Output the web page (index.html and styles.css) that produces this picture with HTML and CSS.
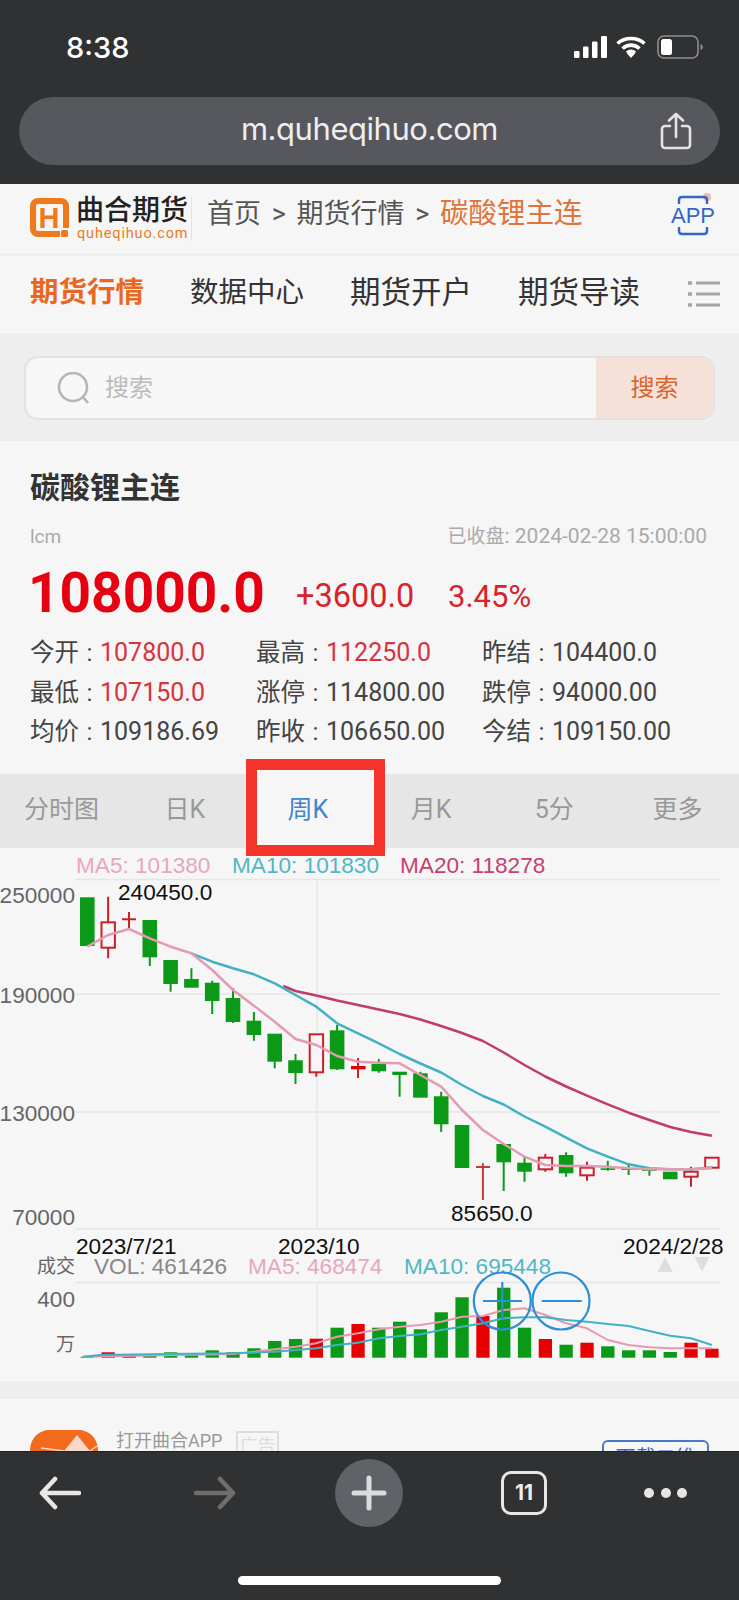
FILE: index.html
```html
<!DOCTYPE html>
<html lang="zh-CN">
<head>
  <meta charset="UTF-8" />
  <meta name="viewport" content="width=device-width, initial-scale=1.0" />
  <title>碳酸锂主连 - 曲合期货</title>
  <link rel="stylesheet" href="styles.css">
</head>
<body>
<div class="phone">

  <div class="browser-top">
    <div class="status-row">
      <span class="clock">8:38</span>
      <div class="status-icons">
        <svg class="signal" width="34" height="22" viewBox="0 0 34 22">
          <rect x="0" y="15" width="5.5" height="7" rx="1.2" fill="#fff"/>
          <rect x="9" y="10.5" width="5.5" height="11.5" rx="1.2" fill="#fff"/>
          <rect x="18" y="5.5" width="5.5" height="16.5" rx="1.2" fill="#fff"/>
          <rect x="27" y="0" width="6" height="22" rx="1.2" fill="#fff"/>
        </svg>
        <svg width="30" height="22" viewBox="0 0 30 22" fill="none" stroke="#fff" stroke-width="3.6">
          <path d="M1.5 7.5C9 .8 21 .8 28.5 7.5"/>
          <path d="M6.5 12.5C11.5 8 18.5 8 23.5 12.5"/>
          <path d="M11 17C13.5 15 16.5 15 19 17"/>
          <path d="M15 22l-4-4.5q4-2.5 8 0z" fill="#fff" stroke="none"/>
        </svg>
        <svg width="46" height="24" viewBox="0 0 46 24">
          <rect x="1" y="1" width="40" height="22" rx="6" fill="none" stroke="#8d8e90" stroke-width="1.6"/>
          <rect x="4" y="4" width="11" height="16" rx="2.5" fill="#fff"/>
          <path d="M43.5 9c1.5.5 2.3 1.5 2.3 3s-.8 2.5-2.3 3z" fill="#8d8e90"/>
        </svg>
      </div>
    </div>
    <div class="url-pill">
      <span class="url-text">m.quheqihuo.com</span>
      <svg class="share-icon" width="32" height="38" viewBox="0 0 32 38" fill="none" stroke="#e4e4e4" stroke-width="2.6" stroke-linecap="round" stroke-linejoin="round">
        <path d="M16 25V2M9 8.5L16 2l7 6.5"/>
        <path d="M10 14H5a3 3 0 0 0-3 3v16a3 3 0 0 0 3 3h22a3 3 0 0 0 3-3V17a3 3 0 0 0-3-3h-5"/>
      </svg>
    </div>
  </div>

  <div class="site-head">
    <svg class="logo-mark" width="39" height="40" viewBox="0 0 39 40">
      <path d="M30 36H8a5 5 0 0 1-5-5V8a5 5 0 0 1 5-5h23a5 5 0 0 1 5 5v22" fill="#f8f6f4" stroke="#ee7a1c" stroke-width="6"/>
      <rect x="31" y="32" width="7" height="7" rx="1.5" fill="#ee7a1c"/>
      <text x="19" y="30" class="logo-h">H</text>
    </svg>
    <div class="logo-text">
      <span class="logo-name">曲合期货</span>
      <span class="logo-site">quheqihuo.com</span>
    </div>
    <div class="crumbs">首页 &gt; 期货行情 &gt; <span class="crumb-now">碳酸锂主连</span></div>
    <svg class="app-icon" width="46" height="44" viewBox="0 0 46 44" fill="none">
      <circle cx="37" cy="4" r="4" fill="#f2b9b0"/>
      <path d="M9 11V7q0-3 3-3h22q3 0 3 3v4M9 34v4q0 3 3 3h22q3 0 3-3v-4" stroke="#3467c4" stroke-width="2.4"/>
      <text x="23" y="30" class="app-label">APP</text>
    </svg>
  </div>

  <nav class="main-nav">
    <a class="nav-item nav-now">期货行情</a>
    <a class="nav-item nav-small">数据中心</a>
    <a class="nav-item">期货开户</a>
    <a class="nav-item">期货导读</a>
    <svg class="nav-menu" width="32" height="28" viewBox="0 0 32 28" fill="none" stroke="#a5a5a5" stroke-width="3">
      <path d="M8 3h24M8 14h24M8 25h24"/>
      <path d="M0 3h4M0 14h4M0 25h4" stroke-width="3.5"/>
    </svg>
  </nav>

  <div class="search-band">
    <div class="search-box">
      <div class="search-field">
        <svg width="33" height="32" viewBox="0 0 33 32" fill="none" stroke="#b5b5b5" stroke-width="2.6">
          <circle cx="16" cy="15" r="14"/>
          <path d="M26 25l5 6"/>
        </svg>
        <span class="search-hint">搜索</span>
      </div>
      <div class="search-btn">搜索</div>
    </div>
  </div>

  <section class="quote">
    <h1 class="quote-name">碳酸锂主连</h1>
    <div class="quote-meta">
      <span class="quote-code">lcm</span>
      <span class="quote-time"><span class="time-cn">已收盘</span>: 2024-02-28 15:00:00</span>
    </div>
    <div class="price-row">
      <span class="price">108000.0</span>
      <span class="price-change">+3600.0</span>
      <span class="price-pct">3.45%</span>
    </div>
    <div class="quote-grid">
      <div>今开<i>:</i><b class="up">107800.0</b></div>
      <div>最高<i>:</i><b class="up">112250.0</b></div>
      <div>昨结<i>:</i><b>104400.0</b></div>
      <div>最低<i>:</i><b class="up">107150.0</b></div>
      <div>涨停<i>:</i><b>114800.00</b></div>
      <div>跌停<i>:</i><b>94000.00</b></div>
      <div>均价<i>:</i><b>109186.69</b></div>
      <div>昨收<i>:</i><b>106650.00</b></div>
      <div>今结<i>:</i><b>109150.00</b></div>
    </div>
  </section>

  <div class="chart-tabs">
    <span class="tab">分时图</span>
    <span class="tab">日K</span>
    <span class="tab tab-now">周K</span>
    <span class="tab">月K</span>
    <span class="tab">5分</span>
    <span class="tab">更多</span>
    <div class="red-mark"></div>
  </div>

  <!-- viewBox keeps page coordinates, so y here = y on the screen -->
  <svg class="chart" width="739" height="533" viewBox="0 848 739 533">
    <g class="grid">
      <path d="M75 879.5H720M75 994H720M75 1112H720M75 1229H720M75 1282.5H720M317 879.5V1229M317 1282.5V1357"/>
    </g>

    <text x="76" y="873" class="t c-ma5">MA5: 101380</text>
    <text x="232" y="873" class="t c-ma10">MA10: 101830</text>
    <text x="400" y="873" class="t c-ma20">MA20: 118278</text>

    <g class="t c-axis" text-anchor="end">
      <text x="75" y="903">250000</text>
      <text x="75" y="1003">190000</text>
      <text x="75" y="1121">130000</text>
      <text x="75" y="1225">70000</text>
      <text x="75" y="1307">400</text>
    </g>
    <text x="118" y="899.5" class="t">240450.0</text>
    <text x="451" y="1221" class="t">85650.0</text>
    <text x="76" y="1253.5" class="t">2023/7/21</text>
    <text x="278" y="1253.5" class="t">2023/10</text>
    <text x="623" y="1253.5" class="t">2024/2/28</text>

    <path class="wick-g" d="M149.8 957V966M170.6 984V991.7M191.4 968.3V980M212.2 980.7V1014M233 988V1023M253.9 1012V1040.7M274.7 1061V1068.3M295.5 1054V1084M337.1 1025V1070M378.8 1059V1072.7M399.6 1075V1096.7M420.4 1071.7V1074M441.2 1091.7V1132M503.7 1162V1191M524.5 1156.7V1181.7M566.1 1152.3V1176.7M607.8 1160.7V1170.7M628.6 1163V1175M649.4 1170V1175.7"/>
    <g class="body-g">
      <rect x="80" y="897.3" width="14.6" height="48.7"/>
      <rect x="142.5" y="920" width="14.6" height="37.3"/>
      <rect x="163.3" y="960" width="14.6" height="24"/>
      <rect x="184.1" y="979" width="14.6" height="8.7"/>
      <rect x="204.9" y="982.7" width="14.6" height="18.3"/>
      <rect x="225.7" y="998" width="14.6" height="24"/>
      <rect x="246.6" y="1020.7" width="14.6" height="14.3"/>
      <rect x="267.4" y="1033.7" width="14.6" height="28"/>
      <rect x="288.2" y="1060.3" width="14.6" height="12.7"/>
      <rect x="329.8" y="1030.3" width="14.6" height="39"/>
      <rect x="371.5" y="1064" width="14.6" height="7.3"/>
      <rect x="392.3" y="1071.7" width="14.6" height="3.3"/>
      <rect x="413.1" y="1073.3" width="14.6" height="24.4"/>
      <rect x="433.9" y="1096.3" width="14.6" height="28"/>
      <rect x="454.7" y="1125" width="14.6" height="43"/>
      <rect x="496.4" y="1144" width="14.6" height="18.3"/>
      <rect x="517.2" y="1162.7" width="14.6" height="9"/>
      <rect x="558.8" y="1155" width="14.6" height="18.3"/>
      <rect x="600.5" y="1168.3" width="14.6" height="1.6"/>
      <rect x="621.3" y="1168.3" width="14.6" height="1.6"/>
      <rect x="642.1" y="1169.3" width="14.6" height="1.6"/>
      <rect x="662.9" y="1171.7" width="14.6" height="7.6"/>
    </g>
    <path class="wick-r" d="M108.1 896.7V922.3M108.1 947.7V958.3M129 912V928M122 919.3H136M316.3 1072.3V1076.7M358 1058V1078M545.3 1154V1157.7M545.3 1169.3V1171.7M587 1161.7V1167.7M587 1175.3V1180.7M691 1166.7V1171.7M691 1176.7V1186.7"/>
    <path class="wick-thin" d="M482.9 1163.3V1200M476 1167H490"/>
    <g class="body-r">
      <rect x="101.5" y="922.3" width="13.4" height="25.4"/>
      <rect x="309.7" y="1034.3" width="13.4" height="38"/>
      <rect x="538.7" y="1157.7" width="13.4" height="11.6"/>
      <rect x="580.3" y="1167.7" width="13.4" height="7.6"/>
      <rect x="684.3" y="1171.7" width="13.4" height="5"/>
      <rect x="705.2" y="1157.7" width="13.4" height="10"/>
    </g>
    <rect x="351" y="1066" width="14.6" height="3.3" fill="#e00000"/>

    <polyline class="line-ma20" points="283.3,986 295.5,991 316.3,995.5 337.1,1000.5 358,1005 378.8,1009.5 399.6,1014 420.4,1019.5 441.2,1026 462,1033 482.9,1041 503.7,1052.5 524.5,1065 545.3,1076.5 566.1,1086.5 587,1095.7 607.8,1104.3 628.6,1112.7 649.4,1120 670.2,1127 691,1132 711.9,1135.7"/>
    <polyline class="line-ma10" points="191.4,953.3 212.2,961.7 233,968.3 253.9,974.3 274.7,983.3 295.5,995 316.3,1006.7 337.1,1023.3 358,1033.3 378.8,1043.3 399.6,1054 420.4,1063.5 441.2,1072.5 462,1085 482.9,1096 503.7,1104.5 524.5,1116.5 545.3,1126.7 566.1,1137.7 587,1148.3 607.8,1156.7 628.6,1164.3 649.4,1168.3 670.2,1169.3 691,1169.3 711.9,1167.7"/>
    <polyline class="line-ma5" points="87.3,946.7 108.1,935 129,929 149.8,938.3 170.6,946.7 191.4,953.3 212.2,970 233,990 253.9,1005.7 274.7,1021.7 295.5,1039 316.3,1045 337.1,1056 358,1061.7 378.8,1062.7 399.6,1063.3 420.4,1075 441.2,1086.7 462,1110 482.9,1130 503.7,1144 524.5,1156.7 545.3,1165 566.1,1166 587,1166 607.8,1166.7 628.6,1168.3 649.4,1169.3 670.2,1169.3 691,1169.3 711.9,1168.3"/>

    <text x="75" y="1272.5" class="t-cjk c-axis" text-anchor="end">成交</text>
    <text x="94" y="1274" class="t c-vol">VOL: 461426</text>
    <text x="248" y="1274" class="t c-ma5">MA5: 468474</text>
    <text x="404" y="1274" class="t c-ma10">MA10: 695448</text>
    <text x="75" y="1351" class="t-cjk c-axis" text-anchor="end">万</text>
    <polygon points="665,1257 657.5,1272 672.5,1272" fill="#dedede"/>
    <polygon points="702,1272 694.5,1257 709.5,1257" fill="#dedede"/>

    <g class="bar-g">
      <rect x="80.7" y="1356.7" width="13.3" height="1"/>
      <rect x="143.2" y="1355.7" width="13.3" height="2"/>
      <rect x="164" y="1352.3" width="13.3" height="5.4"/>
      <rect x="184.8" y="1354" width="13.3" height="3.7"/>
      <rect x="205.6" y="1350.3" width="13.3" height="7.4"/>
      <rect x="226.4" y="1352.3" width="13.3" height="5.4"/>
      <rect x="247.3" y="1348.3" width="13.3" height="9.4"/>
      <rect x="268.1" y="1341" width="13.3" height="16.7"/>
      <rect x="288.9" y="1339" width="13.3" height="18.7"/>
      <rect x="330.5" y="1327.7" width="13.3" height="30"/>
      <rect x="372.2" y="1327.7" width="13.3" height="30"/>
      <rect x="393" y="1321.7" width="13.3" height="36"/>
      <rect x="413.8" y="1329.3" width="13.3" height="28.4"/>
      <rect x="434.6" y="1312.3" width="13.3" height="45.4"/>
      <rect x="455.4" y="1297.3" width="13.3" height="60.4"/>
      <rect x="497.1" y="1287.7" width="13.3" height="70"/>
      <rect x="517.9" y="1327.7" width="13.3" height="30"/>
      <rect x="559.5" y="1344.7" width="13.3" height="13"/>
      <rect x="601.2" y="1346.3" width="13.3" height="11.4"/>
      <rect x="622" y="1350.3" width="13.3" height="7.4"/>
      <rect x="642.8" y="1350.3" width="13.3" height="7.4"/>
      <rect x="663.6" y="1352" width="13.3" height="5.7"/>
    </g>
    <g class="bar-r">
      <rect x="101.5" y="1352.3" width="13.3" height="5.4"/>
      <rect x="122.4" y="1356" width="13.3" height="1.7"/>
      <rect x="309.7" y="1338.7" width="13.3" height="19"/>
      <rect x="351.4" y="1324" width="13.3" height="33.7"/>
      <rect x="476.3" y="1316" width="13.3" height="41.7"/>
      <rect x="538.7" y="1339" width="13.3" height="18.7"/>
      <rect x="580.4" y="1342.7" width="13.3" height="15"/>
      <rect x="684.4" y="1342.7" width="13.3" height="15"/>
      <rect x="705.3" y="1348.7" width="13.3" height="9"/>
    </g>
    <polyline class="vol-ma5" points="83.3,1356.7 233,1354 254,1351.7 275,1349.3 296,1346.7 316,1343.3 337,1336.7 358,1333.3 379,1329.3 400,1326.7 420.4,1325 441.2,1321.7 462,1316.7 483,1316 503.7,1310 524.5,1308.3 545.3,1315 566.1,1323.3 587,1328.3 607.8,1340 628.6,1345 649.4,1347.3 670.2,1348.3 691,1348.3 711.9,1348.3"/>
    <polyline class="vol-ma10" points="83.3,1356.7 100,1355 167,1354 233,1353.3 275,1351.7 316,1348.3 337,1345 358,1342.7 379,1338.3 400,1336 420.4,1334.3 441.2,1330 462,1326.7 483,1323.3 503.7,1318.3 524.5,1317.3 545.3,1317.3 566.1,1320 587,1321.7 607.8,1324 628.6,1326 649.4,1331 670.2,1335.7 691,1338.3 711.9,1345"/>

    <!-- zoom buttons over the volume chart -->
    <g class="zoom-btn">
      <circle cx="502.3" cy="1301" r="28.5"/>
      <circle cx="561" cy="1301" r="28.5"/>
      <path d="M483 1301H522M502.3 1282V1320M541.7 1301H581.7"/>
    </g>
  </svg>

  <div class="band"></div>

  <div class="ad-row">
    <svg class="ad-icon" width="68" height="21" viewBox="0 0 68 21">
      <path d="M0 21C0 8 9 0 20 0H48C59 0 68 8 68 21Z" fill="#f26a1b"/>
      <path d="M34 21L47 5 60 21Z" fill="#f9d9c8"/>
      <path d="M11 18l23 3M60 21l7-5" stroke="#f9d9c8" stroke-width="1.5" fill="none"/>
    </svg>
    <span class="ad-name">打开曲合APP</span>
    <span class="ad-tag">广告</span>
    <span class="ad-btn">下载二维</span>
  </div>

  <div class="browser-bottom">
    <div class="tool-row">
      <svg width="42" height="34" viewBox="0 0 42 34" fill="none" stroke="#e6e6e6" stroke-width="4.6" stroke-linecap="round" stroke-linejoin="round">
        <path d="M40 17H3M16 3L3 17l13 14"/>
      </svg>
      <svg class="tool-fwd" width="42" height="34" viewBox="0 0 42 34" fill="none" stroke="#6e6e6e" stroke-width="4.6" stroke-linecap="round" stroke-linejoin="round">
        <path d="M2 17h37M26 3l13 14-13 14"/>
      </svg>
      <div class="plus-btn">
        <svg width="36" height="36" viewBox="0 0 36 36" stroke="#dcdcdc" stroke-width="5" stroke-linecap="round">
          <path d="M3 18h30M18 3v30"/>
        </svg>
      </div>
      <div class="tab-count">11</div>
      <div class="more-dots"><i></i><i></i><i></i></div>
    </div>
    <div class="home-bar"></div>
  </div>

</div>
</body>
</html>
```
FILE: styles.css
```css
* {
  box-sizing: border-box;
}
body {
  margin: 0;
  background: #f6f6f6;
  font-family: Roboto, "Noto Sans CJK SC", sans-serif;
}
.phone {
  width: 739px;
  height: 1600px;
  overflow: hidden;
  display: flex;
  flex-direction: column;
}

/* browser chrome, top */
.browser-top {
  height: 184px;
  background: #303133;
  padding: 0 19px;
  flex: none;
}
.status-row {
  height: 97px;
  display: flex;
  align-items: center;
  justify-content: space-between;
  padding: 0 17px 3px 47px;
}
.clock {
  color: #fff;
  font: 500 29px Inter, sans-serif;
}
.status-icons {
  display: flex;
  align-items: center;
  gap: 11px;
}
.signal {
  margin-right: -3px;
}
.url-pill {
  height: 68px;
  border-radius: 34px;
  background: #56585e;
  display: flex;
  align-items: center;
  justify-content: center;
  padding-bottom: 5px;
  position: relative;
}
.url-text {
  color: #eee;
  font: 400 31px Inter, sans-serif;
  letter-spacing: -0.45px;
}
.share-icon {
  position: absolute;
  right: 28px;
  top: 15px;
}

/* site header */
.site-head {
  height: 72px;
  flex: none;
  display: flex;
  align-items: center;
  padding-left: 30px;
  background: #f6f6f6;
  border-bottom: 3px solid #eee;
  position: relative;
}
.logo-mark {
  flex: none;
  margin-top: -2px;
}
.logo-h {
  font: 700 29px "Liberation Sans", sans-serif;
  fill: #ee7a1c;
  text-anchor: middle;
}
.logo-text {
  display: flex;
  flex-direction: column;
  margin-left: 7px;
  width: 116px;
  padding-right: 4px;
  border-right: 1px solid #e4e4e4;
}
.logo-name {
  font-size: 28px;
  line-height: 28px;
  font-weight: 500;
  color: #222;
  white-space: nowrap;
}
.logo-site {
  font: 400 14.5px/15px Roboto, sans-serif;
  color: #ee7a1c;
  letter-spacing: 0.85px;
  margin-top: 1px;
  padding-left: 1px;
  white-space: nowrap;
}
.crumbs {
  margin-left: 15px;
  font-size: 27px;
  word-spacing: 4px;
  color: #555;
  white-space: nowrap;
  margin-top: -16px;
}
.crumb-now {
  font-size: 28.5px;
  color: #e0743a;
}
.app-icon {
  position: absolute;
  left: 670px;
  top: 9px;
}
.app-label {
  font: 400 22px "Liberation Sans", sans-serif;
  fill: #3467c4;
  text-anchor: middle;
}

/* nav */
.main-nav {
  height: 77px;
  flex: none;
  display: flex;
  align-items: center;
  padding: 0 0 10px 30px;
  background: #f6f6f6;
  position: relative;
}
.nav-item {
  font-size: 30.5px;
  color: #333;
  margin-right: 46px;
  white-space: nowrap;
}
.nav-small {
  font-size: 28.5px;
}
.nav-now {
  font-size: 28.5px;
  font-weight: 700;
  color: #e8681f;
}
.nav-menu {
  position: absolute;
  left: 688px;
  top: 24px;
}

/* search */
.search-band {
  height: 108px;
  flex: none;
  background: #eee;
  padding: 23px 24px 0;
}
.search-box {
  height: 64px;
  display: flex;
  border: 2px solid #e2e2e2;
  border-radius: 14px;
  background: #f7f7f7;
  overflow: hidden;
}
.search-field {
  flex: 1;
  display: flex;
  align-items: center;
  gap: 15px;
  padding-left: 31px;
}
.search-hint {
  font-size: 24px;
  color: #bbb;
  margin-top: -6px;
}
.search-btn {
  width: 117px;
  background: #f6e1d9;
  color: #d9652e;
  font-size: 24px;
  display: flex;
  align-items: center;
  justify-content: center;
  padding-bottom: 6px;
}

/* quote */
.quote {
  height: 333px;
  flex: none;
  background: #f6f6f6;
  padding: 25px 30px 0;
}
.quote-name {
  margin: 0;
  font-size: 30px;
  line-height: 44px;
  font-weight: 700;
  color: #333;
}
.quote-meta {
  display: flex;
  justify-content: space-between;
  align-items: center;
  margin-top: 13px;
  color: #aaa;
  line-height: 26px;
  padding-right: 2px;
}
.quote-code {
  font-size: 19px;
}
.quote-time {
  font-size: 21px;
}
.time-cn {
  font-size: 19px;
}
.price-row {
  display: flex;
  align-items: center;
  height: 62px;
  margin-top: 12px;
}
.price {
  font: 700 55px Roboto, sans-serif;
  color: #e60012;
  width: 268px;
  margin-left: -2px;
}
.price-change {
  font-size: 32.5px;
  color: #d8232a;
  width: 152px;
  margin-top: 6px;
}
.price-pct {
  font-size: 31px;
  color: #d8232a;
  margin-top: 6px;
}
.quote-grid {
  display: grid;
  grid-template-columns: 226px 226px 1fr;
  grid-auto-rows: 39.5px;
  align-items: center;
  margin-top: 7px;
  font-size: 24.5px;
  color: #444;
  white-space: nowrap;
}
.quote-grid i {
  display: inline-block;
  width: 21px;
  text-align: center;
  font-style: normal;
}
.quote-grid b {
  font-size: 25px;
  font-weight: 400;
}
.quote-grid .up {
  color: #d8323c;
}

/* tabs */
.chart-tabs {
  height: 74px;
  flex: none;
  background: #e6e6e6;
  display: flex;
  position: relative;
}
.chart-tabs::before {
  content: "";
  position: absolute;
  left: 257px;
  top: 0;
  width: 118px;
  height: 74px;
  background: #f6f6f6;
}
.tab {
  flex: 1;
  display: flex;
  align-items: center;
  justify-content: center;
  font-size: 25px;
  color: #999;
  padding-bottom: 8px;
  z-index: 1;
}
.tab-now {
  color: #3f86cc;
}
.red-mark {
  position: absolute;
  left: 246px;
  top: -15px;
  width: 139px;
  height: 97px;
  border: 11px solid #f4332a;
  z-index: 2;
}

/* chart */
.chart {
  display: block;
  flex: none;
  background: #f6f6f6;
}
.grid path {
  stroke: #e6e6e6;
  stroke-width: 1.3;
  fill: none;
}
.t {
  font: 400 22.6px "Liberation Sans", sans-serif;
  fill: #111;
}
.t-cjk {
  font: 400 19px "Noto Sans CJK SC", sans-serif;
}
.c-ma5 { fill: #e8a6bd; }
.c-ma10 { fill: #4fb7c6; }
.c-ma20 { fill: #c7406f; }
.c-axis { fill: #666; }
.c-vol { fill: #888; }
.wick-g {
  stroke: #0a9a17;
  stroke-width: 2;
  fill: none;
}
.body-g {
  fill: #0a9a17;
}
.wick-r {
  stroke: #cc2028;
  stroke-width: 2;
  fill: none;
}
.wick-thin {
  stroke: #c23a3a;
  stroke-width: 2;
  fill: none;
}
.body-r {
  stroke: #cc2028;
  stroke-width: 2;
  fill: #f6f6f6;
}
.line-ma5, .line-ma10, .line-ma20, .vol-ma5, .vol-ma10 {
  fill: none;
  stroke-linejoin: round;
}
.line-ma5 {
  stroke: #e39ab3;
  stroke-width: 2.5;
}
.line-ma10 {
  stroke: #40b2c4;
  stroke-width: 2.5;
}
.line-ma20 {
  stroke: #c23a6e;
  stroke-width: 2.5;
}
.bar-g {
  fill: #0a9a17;
}
.bar-r {
  fill: #e60000;
}
.vol-ma5 {
  stroke: #e998b0;
  stroke-width: 2;
}
.vol-ma10 {
  stroke: #40b2c4;
  stroke-width: 2;
}
.zoom-btn {
  fill: none;
  stroke: #2f8ed8;
  stroke-width: 2.2;
}

.band {
  height: 18px;
  flex: none;
  background: #eee;
}

/* ad row, cut off by the browser bar */
.ad-row {
  height: 52px;
  flex: none;
  background: #f6f6f6;
  position: relative;
  overflow: hidden;
}
.ad-icon {
  position: absolute;
  left: 30px;
  top: 31px;
}
.ad-name {
  position: absolute;
  left: 116px;
  top: 27px;
  font-size: 18px;
  line-height: 30px;
  color: #999;
  white-space: nowrap;
}
.ad-tag {
  position: absolute;
  left: 236px;
  top: 32px;
  width: 43px;
  height: 30px;
  border: 2px solid #ddd;
  color: #ddd;
  font-size: 18px;
  line-height: 26px;
  text-align: center;
}
.ad-btn {
  position: absolute;
  left: 602px;
  top: 41px;
  width: 107px;
  height: 40px;
  border: 2px solid #4a78c8;
  border-radius: 6px;
  color: #3467c4;
  font-size: 20px;
  text-align: center;
  line-height: 32px;
}

/* browser chrome, bottom */
.browser-bottom {
  flex: 1;
  background: #303133;
  border-top: 1px solid #222;
  position: relative;
}
.tool-row {
  height: 76px;
  margin-top: 3px;
  display: flex;
  align-items: center;
  padding-left: 39px;
}
.tool-fwd {
  margin-left: 113px;
}
.plus-btn {
  width: 68px;
  height: 68px;
  margin-left: 99px;
  border-radius: 50%;
  background: #5f6266;
  display: flex;
  align-items: center;
  justify-content: center;
}
.tab-count {
  width: 46px;
  height: 44px;
  margin-left: 98px;
  border: 3.5px solid #e6e6e6;
  border-radius: 10px;
  color: #eee;
  font: 700 21px/37px Inter, sans-serif;
  text-align: center;
}
.more-dots {
  display: flex;
  gap: 6.5px;
  margin-left: 97px;
}
.more-dots i {
  width: 10px;
  height: 10px;
  border-radius: 50%;
  background: #e6e6e6;
}
.home-bar {
  position: absolute;
  left: 238px;
  top: 124px;
  width: 263px;
  height: 9px;
  border-radius: 5px;
  background: #fff;
}
```
